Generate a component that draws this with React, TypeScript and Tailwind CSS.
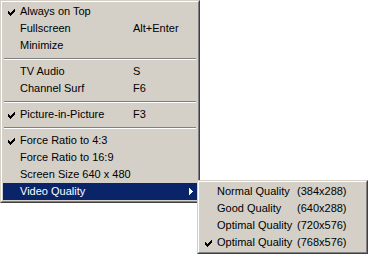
import React from 'react';

type Item =
  | { sep: true }
  | { sep?: false; label: string; key?: string; checked?: boolean; sub?: boolean; active?: boolean };

const mainItems: Item[] = [
  { label: 'Always on Top', checked: true },
  { label: 'Fullscreen', key: 'Alt+Enter' },
  { label: 'Minimize' },
  { sep: true },
  { label: 'TV Audio', key: 'S' },
  { label: 'Channel Surf', key: 'F6' },
  { sep: true },
  { label: 'Picture-in-Picture', key: 'F3', checked: true },
  { sep: true },
  { label: 'Force Ratio to 4:3', checked: true },
  { label: 'Force Ratio to 16:9' },
  { label: 'Screen Size 640 x 480' },
  { label: 'Video Quality', sub: true, active: true },
];

const subItems: Item[] = [
  { label: 'Normal Quality', key: '(384x288)' },
  { label: 'Good Quality', key: '(640x288)' },
  { label: 'Optimal Quality', key: '(720x576)' },
  { label: 'Optimal Quality', key: '(768x576)', checked: true },
];

function Check({ color }: { color: string }) {
  return (
    <svg width="7" height="7" viewBox="0 0 7 7" shapeRendering="crispEdges" className="mt-px">
      <path
        d="M6 0h1v1h-1z M5 1h2v1h-2z M0 2h1v1h-1z M4 2h3v1h-3z M0 3h2v1h-2z M3 3h3v1h-3z M0 4h5v1h-5z M1 5h3v1h-3z M2 6h1v1h-1z"
        fill={color}
      />
    </svg>
  );
}

function Frame({ children, className }: { children: React.ReactNode; className?: string }) {
  return (
    <div className={`border border-t-[#d4d0c8] border-l-[#d4d0c8] border-r-[#404040] border-b-[#404040] bg-[#d4d0c8] ${className ?? ''}`}>
      <div className="border border-t-white border-l-white border-r-[#808080] border-b-[#808080] p-px">
        {children}
      </div>
    </div>
  );
}

function Rows({ items, labelW }: { items: Item[]; labelW: string }) {
  return (
    <>
      {items.map((it, i) =>
        it.sep ? (
          <div key={i} className="h-[9px] flex flex-col justify-center">
            <div className="h-px bg-[#808080] mx-px" />
            <div className="h-px bg-white mx-px" />
          </div>
        ) : (
          <div
            key={i}
            className={`h-[17px] flex items-center ${it.active ? 'bg-[#0a246a] text-white' : 'text-black'}`}
          >
            <div className="w-[17px] pl-[5px] flex items-center">
              {it.checked && <Check color={it.active ? '#fff' : '#000'} />}
            </div>
            <div className={`${labelW} whitespace-nowrap`}>{it.label}</div>
            <div className="flex-1 whitespace-nowrap">{it.key}</div>
            {it.sub && (
              <svg width="4" height="7" viewBox="0 0 4 7" className="mr-[4px]" shapeRendering="crispEdges">
                <path d="M0 0h1v1h1v1h1v1h1v1h-1v1h-1v1h-1v1h-1z" fill="#fff" />
              </svg>
            )}
          </div>
        )
      )}
    </>
  );
}

export default function App() {
  return (
    <div
      className="relative w-[370px] h-[254px] bg-white overflow-hidden text-[11px] leading-none"
      style={{ fontFamily: '"Liberation Sans", Arial, sans-serif' }}
    >
      <Frame className="w-[200px]">
        <Rows items={mainItems} labelW="w-[113px]" />
      </Frame>
      <Frame className="absolute left-[197px] top-[180px] w-[171px]">
        <Rows items={subItems} labelW="w-[80px]" />
      </Frame>
    </div>
  );
}
